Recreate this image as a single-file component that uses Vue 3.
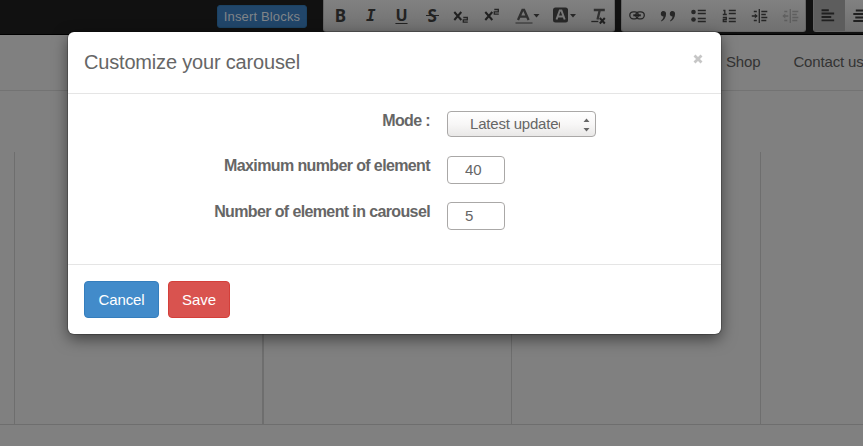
<script setup>
import { ref } from 'vue'

const mode = 'Latest updated'
const maximum = ref('40')
const count = ref('5')
</script>

<template>
  <div class="page">
    <div class="adminbar">
      <button class="insert">Insert Blocks</button>
      <div class="group format">
        <span class="tool bold">B</span>
        <span class="tool italic">I</span>
        <span class="tool underline">U</span>
        <span class="tool strike">S</span>
        <svg class="icon" viewBox="0 0 30 32"><path d="M7 12l7 8M14 12l-7 8" class="thick" /><path d="M16 17.5h4v2.3h-4v2.4h4.5" class="line" /></svg>
        <svg class="icon" viewBox="0 0 30 32"><path d="M7 12l7 8M14 12l-7 8" class="thick" /><path d="M16 9.5h4v2.3h-4v2.4h4.5" class="line" /></svg>
        <svg class="icon wide" viewBox="0 0 38 32"><path d="M9 20l4.5-10h1.6l4.5 10M11 16.7h7" class="glyph" /><path d="M6.5 22h17v2h-17z" class="muted" /><path d="M24.5 14h6l-3 3.5z" class="solid" /></svg>
        <svg class="icon wide" viewBox="0 0 38 32"><rect x="6" y="7.5" width="15" height="15" rx="2.5" class="solid" /><path d="M9.5 19.5l3.3-9h1.6l3.3 9M11 16.5h5" class="reverse" /><path d="M23 14h6l-3 3.5z" class="solid" /></svg>
        <svg class="icon" viewBox="0 0 30 32"><path d="M8.5 10h11M14.5 10l-2.3 9.5" class="glyph" /><path d="M6 21.5h7" class="line" /><path d="M14.5 18l5 5.5M19.5 18l-5 5.5" class="thick" /></svg>
      </div>
      <div class="group insertions">
        <svg class="icon" viewBox="0 0 30 32"><rect x="7.5" y="11.8" width="8.5" height="7" rx="3.5" class="line" /><rect x="13.5" y="11.8" width="8.5" height="7" rx="3.5" class="line" /><path d="M11 15.3h7.5" class="thick" /></svg>
        <svg class="icon" viewBox="0 0 30 32"><path d="M9.3 11a2.8 2.8 0 0 1 3.5 2.8c0 3.6-2 6.5-4.8 7.7v-1.2c1.5-1 2.1-2.1 2.2-3.7a2.9 2.9 0 0 1-.9-5.6zM18.3 11a2.8 2.8 0 0 1 3.5 2.8c0 3.6-2 6.5-4.8 7.7v-1.2c1.5-1 2.1-2.1 2.2-3.7a2.9 2.9 0 0 1-.9-5.6z" class="solid" /></svg>
        <svg class="icon" viewBox="0 0 30 32"><circle cx="10.2" cy="12" r="2.3" class="solid" /><circle cx="10.2" cy="19.5" r="2.3" class="solid" /><path d="M14.5 10.5h8M14.5 13.5h8M14.5 18.5h8M14.5 21.5h8" class="line" /></svg>
        <svg class="icon" viewBox="0 0 30 32"><path d="M9 10.5h1.5v4M8.5 14.5h4M8.5 17.5H12v2H9v2h3.5" class="line" /><path d="M14.5 10.5h7M14.5 13.5h7M14.5 18.5h7M14.5 21.5h7" class="line" /></svg>
        <svg class="icon" viewBox="0 0 30 32"><path d="M9.5 11.5h3M9.5 20.5h3M7.5 16h5M15 9v14M17 11.5h6M17 14.5h4.5M17 17.5h6M17 20.5h5" class="line" /><path d="M10.5 13.5l3 2.5-3 2.5z" class="solid" /></svg>
        <svg class="icon disabled" viewBox="0 0 30 32"><path d="M9 11.5h3M9 20.5h3M9 16h4M15 9v14M17 11.5h6M17 14.5h4.5M17 17.5h6M17 20.5h5" class="line" /><path d="M10 13.5l-3 2.5 3 2.5z" class="solid" /></svg>
      </div>
      <div class="group alignment">
        <svg class="icon active" viewBox="0 0 30 32"><path d="M7 10.5h7.5M7 14h13M7 17.5h10M7 21h13" class="thick" /></svg>
        <svg class="icon" viewBox="0 0 30 32"><path d="M10.5 10.5h8M8 14h13M10 17.5h9M8 21h13" class="thick" /></svg>
      </div>
    </div>
    <nav class="nav"><a>Shop</a><a>Contact us</a></nav>
    <main class="columns">
      <div class="edge"></div><div class="column first"></div><div class="column"></div><div class="column"></div><div class="last"></div>
    </main>

    <section class="modal">
      <header class="head">
        <h4>Customize your carousel</h4>
        <button class="close" aria-label="Close"><svg viewBox="0 0 10 10"><path d="M1.5 1.5l7 7M8.5 1.5l-7 7" /></svg></button>
      </header>
      <div class="body">
        <div class="row mode"><label>Mode :</label><button class="select"><span class="value">{{ mode }}</span><svg class="arrows" viewBox="0 0 7 14"><path d="M.5 4L3.5.5l3 3.5zM.5 10l3 3.5 3-3.5z" /></svg></button></div>
        <div class="row"><label>Maximum number of element</label><input v-model="maximum" /></div>
        <div class="row"><label>Number of element in carousel</label><input v-model="count" /></div>
      </div>
      <footer class="foot">
        <button class="btn cancel">Cancel</button>
        <button class="btn save">Save</button>
      </footer>
    </section>
  </div>
</template>

<style>
body { margin: 0; overflow: hidden; }
</style>

<style scoped>
* { box-sizing: border-box; }
.page { position: relative; width: 863px; height: 446px; overflow: hidden; background: #808080; font: 15px/22px "Liberation Sans", Arial, sans-serif; color: #666; display: flex; flex-direction: column; }
button, input { font-family: inherit; }
.adminbar { height: 35px; flex: none; display: flex; align-items: flex-start; background: #111; border-bottom: 1px solid #000; padding-left: 217px; }
.insert { flex: none; width: 90px; height: 23px; margin: 5px 16px 0 0; padding: 0; border: 1px solid #1b4263; border-radius: 3px; background: #21466a; color: #808488; font-size: 13px; line-height: 20px; letter-spacing: .15px; }
.group { flex: none; height: 32px; display: flex; background: linear-gradient(#818181, #707070); border: solid #666; border-width: 0 1px 1px; border-radius: 0 0 3px 3px; color: #222; }
.format { width: 292px; padding-left: 1px; margin-right: 6px; }
.insertions { width: 185px; margin-right: 7px; }
.alignment { width: 130px; }
.tool { width: 30.6px; height: 31px; flex: none; text-align: center; font: bold 16px/32px "DejaVu Sans", sans-serif; }
.bold { font-family: "Noto Sans", sans-serif; font-size: 17px; }
.italic { font-family: "DejaVu Sans Mono", monospace; font-style: italic; line-height: 31px; }
.underline { font-family: "Noto Sans", sans-serif; line-height: 30px; text-decoration: underline; text-underline-offset: 2px; }
.strike { font-family: "Noto Sans", sans-serif; font-size: 17px; background: linear-gradient(#222, #222) center 15px / 13px 1px no-repeat; }
.icon { width: 30.6px; height: 32px; flex: none; }
.wide { width: 38px; }
.active { background: #5d5d5d; height: 31px; }
.disabled { opacity: .3; }
.icon path, .icon rect { fill: none; }
.icon .line { stroke: #252525; stroke-width: 1.3; }
.icon .thick { stroke: #202020; stroke-width: 2; }
.icon .glyph { stroke: #303030; stroke-width: 2.3; }
.icon .reverse { stroke: #777; stroke-width: 2; }
.icon .solid { fill: #272727; }
.icon .muted { fill: #505050; }
.nav { height: 56px; flex: none; border-bottom: 1px solid #737373; padding: 16px 0 0 726px; display: flex; gap: 33px; color: #333; white-space: nowrap; letter-spacing: -.15px; }
.columns { height: 334px; flex: none; padding-top: 61px; border-bottom: 1px solid #6e6e6e; display: flex; }
.edge { width: 15px; border-right: 1px solid #6e6e6e; }
.column { width: 249px; border-right: 1px solid #6e6e6e; }
.first { border-right-width: 2px; }
.column:nth-child(3) { width: 248px; }
.modal { position: absolute; left: 68px; top: 32px; width: 653px; height: 302px; background: #fff; border-radius: 6px; box-shadow: 0 0 0 1px rgba(0,0,0,.2), 0 5px 15px rgba(0,0,0,.5); display: flex; flex-direction: column; }
.head { height: 62px; flex: none; border-bottom: 1px solid #e5e5e5; display: flex; justify-content: space-between; padding: 16px 16px 0; }
h4 { margin: 0; font-size: 20px; line-height: 28px; font-weight: 400; letter-spacing: -.18px; }
.close { border: 0; padding: 0; background: none; height: 22px; width: 14px; display: flex; align-items: center; justify-content: center; }
.close svg { width: 10px; height: 10px; fill: none; stroke: #c6c6c6; stroke-width: 2.8; }
.body { height: 170px; flex: none; padding-top: 16px; }
.row { display: flex; height: 46px; }
label { width: 362px; margin-right: 17px; text-align: right; font-size: 16px; font-weight: 700; line-height: 20px; letter-spacing: -.62px; white-space: nowrap; }
.mode label { line-height: 22px; }
.select { width: 149px; height: 26px; margin-top: 1px; padding: 0 5px 0 22px; border: 1px solid #aaa8a7; border-radius: 4px; background: linear-gradient(#fff, #f8f7f7 50%, #e9e8e7); display: flex; align-items: center; justify-content: space-between; color: #666; font-size: 15px; }
.value { width: 90px; overflow: hidden; white-space: nowrap; text-align: left; line-height: 22px; letter-spacing: -.2px; }
.arrows { width: 7px; height: 14px; margin-top: 2px; fill: #666; }
input { width: 58px; height: 28px; border: 1px solid #aaa8a7; border-radius: 4px; padding: 0 17px 2px; color: #666; background: #fff; font-size: 15px; }
.foot { flex: 1; border-top: 1px solid #e5e5e5; padding: 16px; display: flex; gap: 9px; }
.btn { height: 37px; padding: 0; border: 1px solid; border-radius: 4px; color: #fff; font-size: 15px; letter-spacing: -.08px; }
.cancel { width: 75px; background: #428bca; border-color: #357ebd; }
.save { width: 62px; background: #d9534f; border-color: #d43f3a; }
</style>
